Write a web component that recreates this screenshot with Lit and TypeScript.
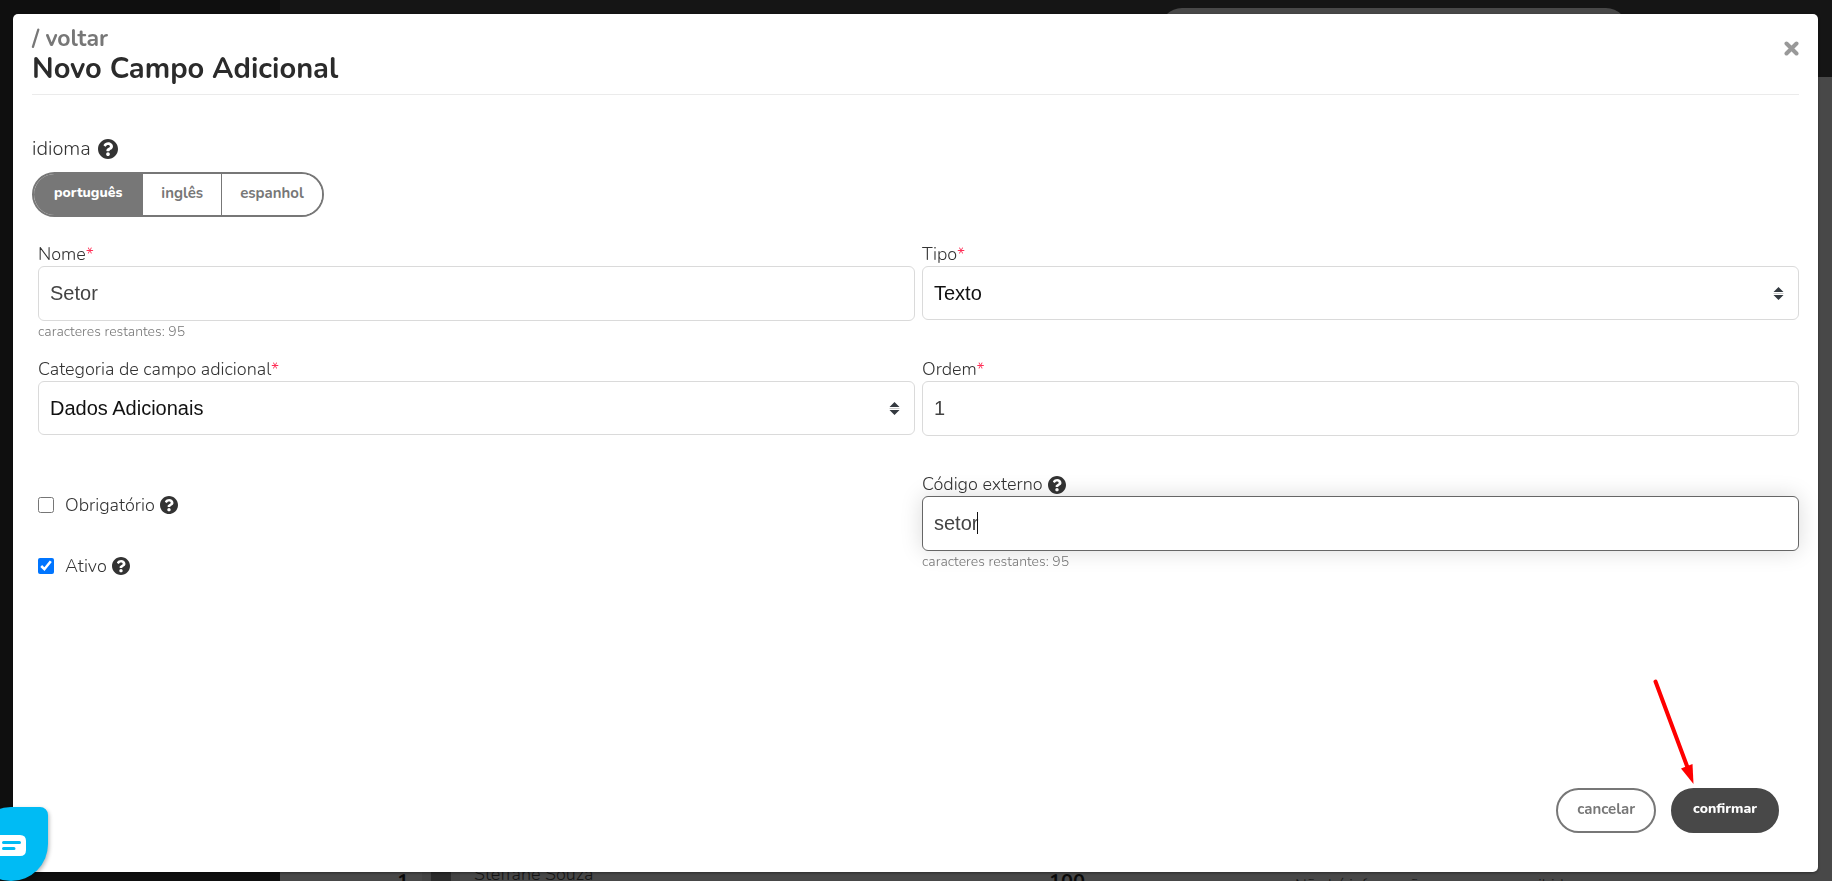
import { LitElement, html, svg, css } from "lit";
import { customElement, state } from "lit/decorators.js";

const helpIcon = (label: string) => html`<svg class="help" viewBox="8 8 496 496" role="img" aria-label=${label}>
  ${svg`<path d="M504 256c0 136.997-111.043 248-248 248S8 392.997 8 256C8 119.083 119.043 8 256 8s248 111.083 248 248zM262.655 90c-54.497 0-89.255 22.957-116.549 63.758-3.536 5.286-2.353 12.415 2.715 16.258l34.699 26.31c5.205 3.947 12.621 3.008 16.665-2.122 17.864-22.658 30.113-35.797 57.303-35.797 20.429 0 45.698 13.148 45.698 32.958 0 14.976-12.363 22.667-32.534 33.976C247.128 238.528 216 254.941 216 296v4c0 6.627 5.373 12 12 12h56c6.627 0 12-5.373 12-12v-1.333c0-28.462 83.186-29.647 83.186-106.667 0-58.002-60.165-102-116.531-102zM256 338c-25.365 0-46 20.635-46 46 0 25.364 20.635 46 46 46s46-20.636 46-46c0-25.365-20.635-46-46-46z"/>`}
</svg>`;

/* The ranking page that stays behind the dialog, already dimmed. */
@customElement("page-behind")
export class PageBehind extends LitElement {
  static styles = css`
    :host {
      display: grid;
      grid-template-columns: 280px 1fr;
      height: 100vh;
      overflow: hidden;
      background: #484848;
      font-family: "Nunito", "Lato", sans-serif;
    }
    .side { background: #0f0f0f; }
    .main { display: flex; flex-direction: column; min-width: 0; }
    .topbar {
      height: 69px;
      padding: 8px 204px 0 0;
      background: #151515;
      display: flex;
      justify-content: flex-end;
    }
    .search { width: 468px; height: 44px; border-radius: 22px; background: #484848; }
    .content { flex: 1; }
    .row {
      height: 9px;
      overflow: hidden;
      display: grid;
      grid-template-columns: 117px 25px 38px 14px 575px 246px 1fr;
      color: #161616;
    }
    .rank, .points { font-size: 20px; line-height: 20px; font-weight: 700; color: #0a0a0a; }
    .avatar {
      width: 38px;
      height: 38px;
      background: linear-gradient(90deg, #434343 9px, #2b2b2b 9px 29px, #434343 29px);
    }
    .name { font-size: 18px; line-height: 12px; height: 12px; margin-top: -4px; font-weight: 300; }
    .note { font-size: 16px; line-height: 26px; white-space: nowrap; }
  `;
  render() {
    return html`
      <div class="side"></div>
      <div class="main">
        <div class="topbar"><div class="search"></div></div>
        <div class="content"></div>
        <div class="row">
          <span></span><span class="rank">1</span><span class="avatar"></span><span></span>
          <span class="name">Steffane Souza</span><span class="points">100</span>
          <span class="note">Não há informações para serem exibidas</span>
        </div>
      </div>
    `;
  }
}

@customElement("app-root")
export class AppRoot extends LitElement {
  @state() private language = "português";

  static styles = css`
    :host {
      display: block;
      color: #333;
      font-family: "Nunito", "Lato", sans-serif;
      font-weight: 300;
    }
    * { box-sizing: border-box; }
    button { font: inherit; cursor: pointer; }

    .overlay {
      position: fixed;
      inset: 0;
      display: flex;
      padding: 14px 14px 9px 13px;
    }
    .dialog {
      flex: 1;
      display: flex;
      flex-direction: column;
      padding: 0 19px;
      border-radius: 5px;
      background: #fff;
      box-shadow: 0 1px 3px rgba(0, 0, 0, 0.4);
    }

    .head {
      display: flex;
      justify-content: space-between;
      height: 81px;
      padding-top: 11px;
      border-bottom: 1px solid #ebebeb;
    }
    .back {
      display: block;
      color: #777;
      font-size: 23px;
      font-weight: 700;
      line-height: 28px;
      text-decoration: none;
    }
    h1 { margin: 0; color: #2b2b2b; font-size: 29px; font-weight: 700; line-height: 32px; }
    .close { align-self: flex-start; margin-top: 16px; padding: 0; border: 0; background: none; }
    .close svg { display: block; width: 15px; height: 15px; }

    .help { width: 18px; height: 18px; fill: #333; }
    .language { margin-top: 42px; }
    .legend { display: flex; align-items: center; gap: 7px; font-size: 20px; line-height: 24px; }
    .legend .help { width: 20px; height: 20px; }
    .segments {
      display: inline-flex;
      height: 45px;
      margin-top: 11px;
      overflow: hidden;
      border: 2px solid #777;
      border-radius: 23px;
    }
    .segment {
      padding: 0 18px 4px;
      border: 0;
      border-left: 1px solid #777;
      background: #fff;
      color: #777;
      font-size: 15px;
      font-weight: 700;
    }
    .segment:first-child { border-left: 0; padding: 0 20px 4px; }
    .segment.active { background: #777; color: #fff; font-size: 14px; font-weight: 800; }

    .form {
      display: grid;
      grid-template-columns: 1fr 1fr;
      grid-auto-rows: 115px;
      column-gap: 7px;
      margin-top: 26px;
      padding-left: 6px;
    }
    .label {
      display: flex;
      align-items: center;
      gap: 5px;
      height: 23px;
      font-size: 18px;
      line-height: 23px;
    }
    .required { color: #ff2d55; }
    .control {
      display: block;
      width: 100%;
      height: 55px;
      padding: 0 11px;
      border: 1px solid #dadada;
      border-radius: 6px;
      outline: 0;
      background: #fff;
      color: #444;
      font-family: "Liberation Sans", Arial, sans-serif;
      font-size: 20px;
    }
    select.control { appearance: none; height: 54px; color: #111; }
    .box { position: relative; }
    .arrows {
      position: absolute;
      right: 15px;
      top: 21px;
      width: 11px;
      height: 13px;
      pointer-events: none;
    }
    .control.current { border-color: #666; box-shadow: 0 0 22px rgba(0, 0, 0, 0.15); }
    .caret { position: absolute; left: 55px; top: 16px; width: 1px; height: 22px; background: #111; }
    .hint { color: #777; font-size: 14px; line-height: 22px; }
    .checks { display: flex; flex-direction: column; gap: 37px; padding-top: 20px; }
    .check { display: flex; align-items: center; gap: 5px; height: 24px; font-size: 18px; }
    .check input { width: 16px; height: 16px; margin: 0 6px 0 0; accent-color: #0075ff; }

    .actions {
      display: flex;
      gap: 15px;
      justify-content: flex-end;
      margin-top: auto;
      padding: 0 20px 39px 0;
    }
    .action {
      height: 45px;
      padding: 0 19px 4px;
      border: 2px solid #777;
      border-radius: 23px;
      background: #fff;
      color: #777;
      font-size: 15px;
      font-weight: 700;
    }
    .action.primary { padding: 0 20px 4px; border-color: #484848; background: #484848; color: #fff; font-size: 14px; font-weight: 800; }

    .pointer { position: absolute; right: 135px; bottom: 94px; width: 50px; height: 110px; pointer-events: none; }
    .chat {
      position: absolute;
      left: -26px;
      bottom: 0;
      width: 74px;
      height: 74px;
      padding: 0;
      border: 0;
      border-radius: 37px 8px 37px 37px;
      background: #00bbf4;
      box-shadow: 1px 2px 4px rgba(0, 0, 0, 0.3);
    }
    .chat svg { display: block; width: 74px; height: 74px; }
  `;

  private arrows() {
    return html`<svg class="arrows" viewBox="0 0 11 13" aria-hidden="true">
      <path d="M5.500 0L10.500 5H0.500zM5.500 13L0.500 8H10.500z" fill="#343a40" />
      <path d="M0.500 6.500H10.500" stroke="#ccc" />
    </svg>`;
  }

  private segment(name: string) {
    const active = name === this.language;
    return html`<button type="button" class="segment ${active ? "active" : ""}" aria-pressed=${active}
      @click=${() => (this.language = name)}>${name}</button>`;
  }

  render() {
    return html`
      <page-behind aria-hidden="true"></page-behind>
      <div class="overlay">
        <form class="dialog" role="dialog" aria-labelledby="title" @submit=${(e: Event) => e.preventDefault()}>
          <header class="head">
            <div>
              <a class="back" href="#">/ voltar</a>
              <h1 id="title">Novo Campo Adicional</h1>
            </div>
            <button type="button" class="close" aria-label="Fechar">
              <svg viewBox="0 0 15 15"><path d="M2.500 2.500L12.500 12.500M12.500 2.500L2.500 12.500" stroke="#999" stroke-width="4" stroke-linecap="round" /></svg>
            </button>
          </header>

          <section class="language">
            <div class="legend">idioma ${helpIcon("Ajuda")}</div>
            <div class="segments" role="group" aria-label="idioma">
              ${["português", "inglês", "espanhol"].map((name) => this.segment(name))}
            </div>
          </section>

          <div class="form">
            <div>
              <label class="label" for="nome"><span>Nome<span class="required">*</span></span></label>
              <input class="control" id="nome" .value=${"Setor"} />
              <div class="hint">caracteres restantes: 95</div>
            </div>
            <div>
              <label class="label" for="tipo"><span>Tipo<span class="required">*</span></span></label>
              <div class="box">
                <select class="control" id="tipo"><option>Texto</option></select>
                ${this.arrows()}
              </div>
            </div>
            <div>
              <label class="label" for="categoria"><span>Categoria de campo adicional<span class="required">*</span></span></label>
              <div class="box">
                <select class="control" id="categoria"><option>Dados Adicionais</option></select>
                ${this.arrows()}
              </div>
            </div>
            <div>
              <label class="label" for="ordem"><span>Ordem<span class="required">*</span></span></label>
              <input class="control" id="ordem" .value=${"1"} />
            </div>
            <div class="checks">
              <label class="check"><input type="checkbox" />Obrigatório ${helpIcon("Ajuda")}</label>
              <label class="check"><input type="checkbox" checked />Ativo ${helpIcon("Ajuda")}</label>
            </div>
            <div>
              <label class="label" for="codigo">Código externo ${helpIcon("Ajuda")}</label>
              <div class="box">
                <input class="control current" id="codigo" .value=${"setor"} />
                <span class="caret"></span>
              </div>
              <div class="hint">caracteres restantes: 95</div>
            </div>
          </div>

          <footer class="actions">
            <button type="button" class="action">cancelar</button>
            <button type="submit" class="action primary">confirmar</button>
          </footer>
        </form>

        <svg class="pointer" viewBox="0 0 50 110" aria-hidden="true">
          <path d="M8.500 4.500L40 89" stroke="#f00" stroke-width="4" stroke-linecap="round" />
          <path d="M34 91.500L45.500 87L46.500 107z" fill="#f00" />
        </svg>
        <button type="button" class="chat" aria-label="Chat">
          <svg viewBox="0 0 74 74">
            <path d="M26 28H46Q52 28 52 34V43Q52 49 46 49H20V34Q20 28 26 28z" fill="#fff" />
            <path d="M29.500 35.500H45.500M29.500 41.500H40" stroke="#00bbf4" stroke-width="3" stroke-linecap="round" />
          </svg>
        </button>
      </div>
    `;
  }
}
